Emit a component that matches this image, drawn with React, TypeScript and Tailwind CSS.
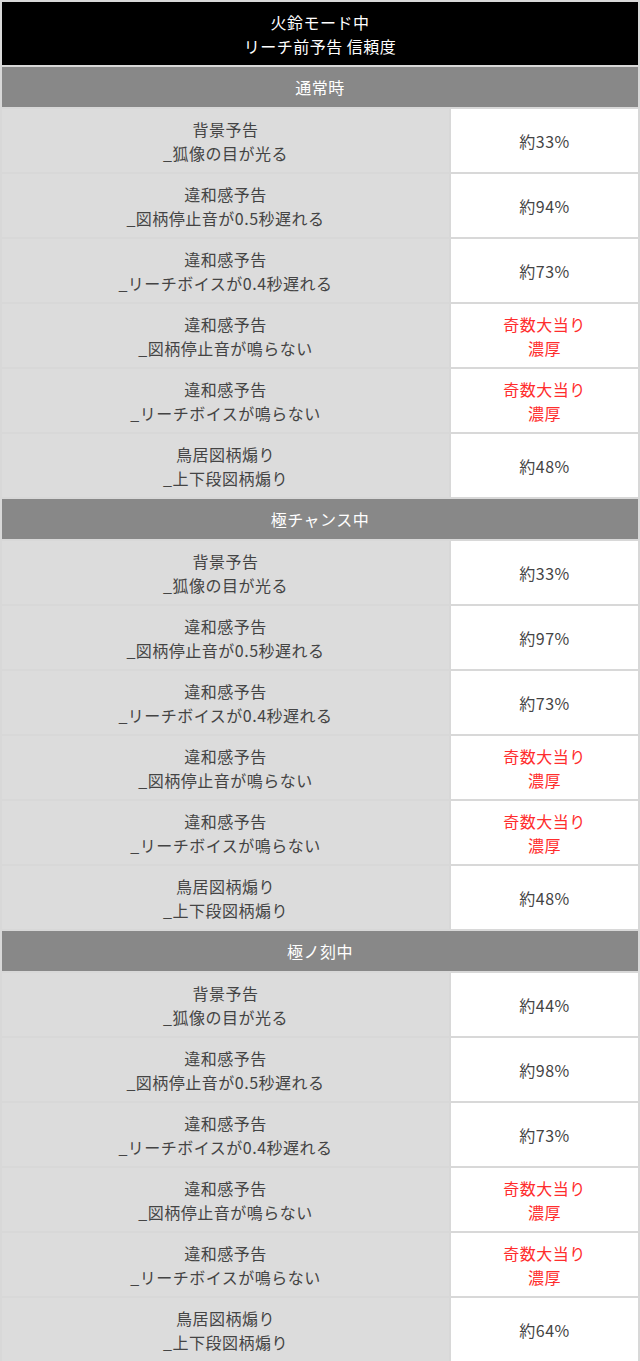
type Row = { label: string; sub: string; value: string; hot?: boolean };

const font = { fontFamily: '"Noto Sans CJK JP", "Noto Sans", sans-serif' };

function rows(a: string, b: string, c: string): Row[] {
  return [
    { label: "背景予告", sub: "_狐像の目が光る", value: a },
    { label: "違和感予告", sub: "_図柄停止音が0.5秒遅れる", value: b },
    { label: "違和感予告", sub: "_リーチボイスが0.4秒遅れる", value: "約73%" },
    { label: "違和感予告", sub: "_図柄停止音が鳴らない", value: "奇数大当り\n濃厚", hot: true },
    { label: "違和感予告", sub: "_リーチボイスが鳴らない", value: "奇数大当り\n濃厚", hot: true },
    { label: "鳥居図柄煽り", sub: "_上下段図柄煽り", value: c },
  ];
}

const sections = [
  { title: "通常時", rows: rows("約33%", "約94%", "約48%") },
  { title: "極チャンス中", rows: rows("約33%", "約97%", "約48%") },
  { title: "極ノ刻中", rows: rows("約44%", "約98%", "約64%") },
];

export default function App() {
  return (
    <div className="w-[640px] bg-white" style={font}>
      <table className="w-full border-collapse text-[16px] leading-[24px] tracking-[0.5px]">
        <thead>
          <tr>
            <th
              colSpan={2}
              className="h-[65px] border-2 border-[#d8d8d8] bg-black font-normal text-white"
            >
              火鈴モード中
              <br />
              リーチ前予告 信頼度
            </th>
          </tr>
        </thead>
        {sections.map((s) => (
          <tbody key={s.title}>
            <tr>
              <td
                colSpan={2}
                className="h-[42px] border-2 border-[#d8d8d8] bg-[#888888] text-center text-white"
              >
                {s.title}
              </td>
            </tr>
            {s.rows.map((r, i) => (
              <tr key={i} className="h-[65px]">
                <td className="w-[449px] border-2 border-[#d8d8d8] bg-[#dcdcdc] text-center text-[#444]">
                  {r.label}
                  <br />
                  {r.sub}
                </td>
                <td
                  className={
                    "border-2 border-[#d8d8d8] bg-white text-center whitespace-pre-line " +
                    (r.hot ? "text-[#ff2d2d]" : "text-[#444]")
                  }
                >
                  {r.value}
                </td>
              </tr>
            ))}
          </tbody>
        ))}
      </table>
    </div>
  );
}
